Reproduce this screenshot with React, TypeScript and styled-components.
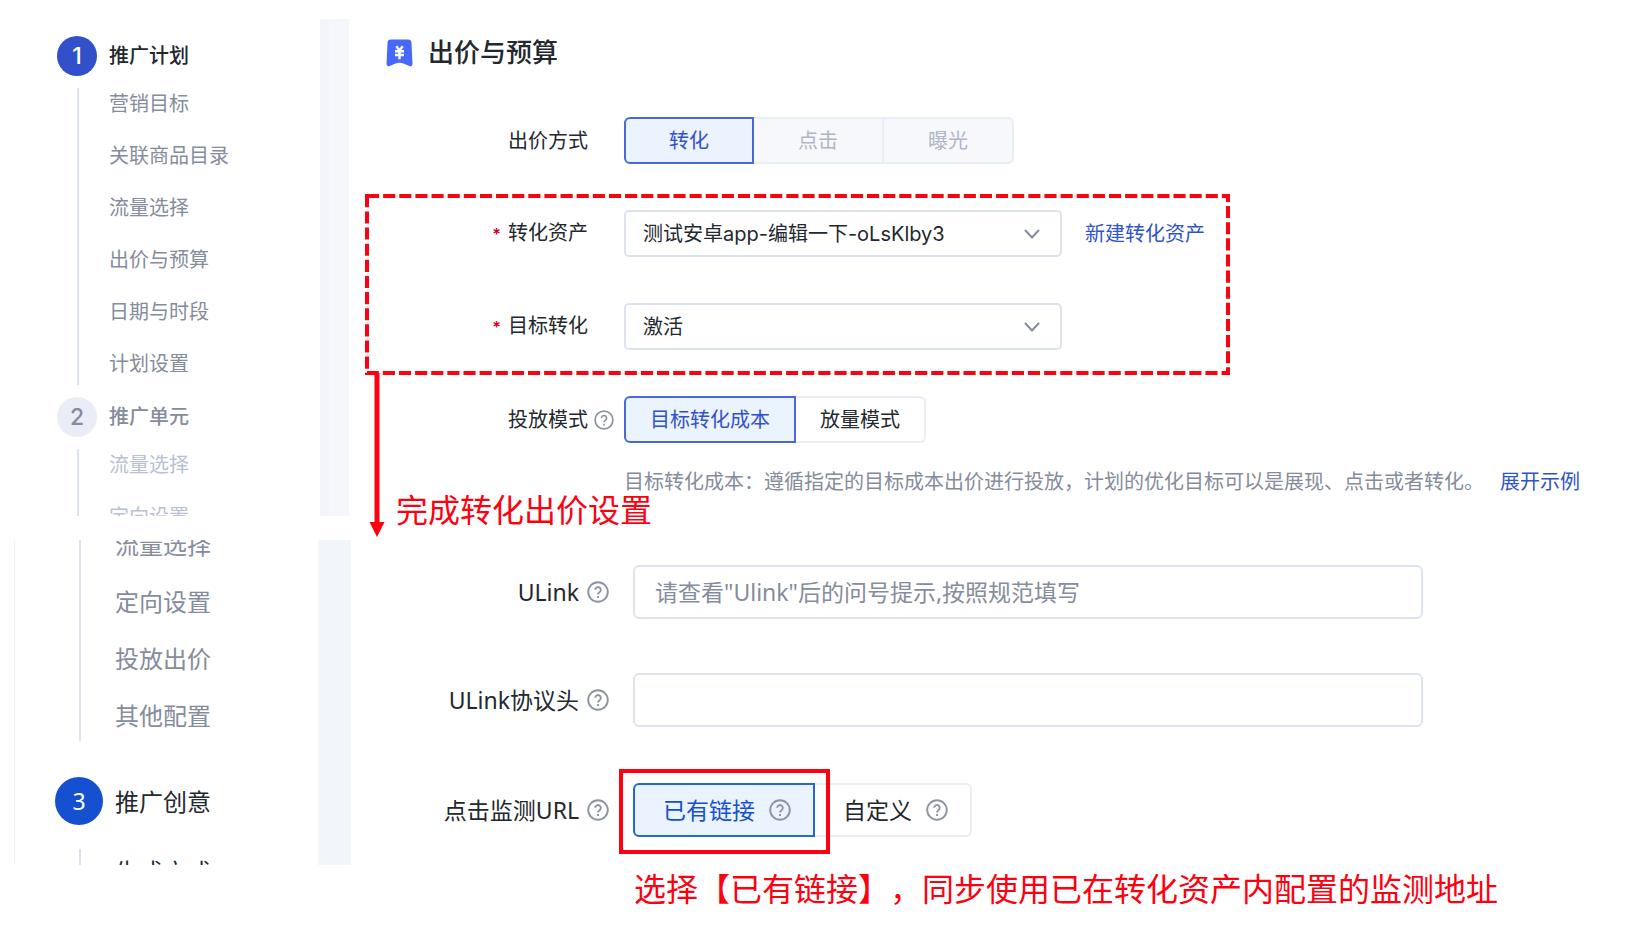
import React from "react";
import styled, { createGlobalStyle, css } from "styled-components";

const color = {
  ink: "#23272e",
  muted: "#858c9c",
  faint: "#b9c1d3",
  brand: "#3350cb",
  brandDeep: "#1450cf",
  link: "#2f54c9",
  tint: "#ebf3fe",
  line: "#dce2ef",
  red: "#ff0011",
};

const upperFont = `Inter, "Noto Sans CJK SC", sans-serif`;
const lowerFont = `"Noto Sans", "Noto Sans CJK SC", sans-serif`;

const GlobalStyle = createGlobalStyle`
  *, *::before, *::after { box-sizing: border-box; }
  body { margin: 0; background: #fff; color: ${color.ink}; font-family: ${upperFont}; text-spacing-trim: space-all; }
  button, input, select { font: inherit; color: inherit; margin: 0; }
  a { color: inherit; text-decoration: none; }
  h2, ol, ul, p { margin: 0; padding: 0; list-style: none; }
`;

type Size = "regular" | "large";

const Page = styled.div`
  display: flex;
  flex-direction: column;
  padding-top: 19px;
`;

const Capture = styled.section<{ $size: Size }>`
  display: flex;
  font-size: 20px;
  line-height: 28px;
  height: 497px;
  ${(p) =>
    p.$size === "large" &&
    css`
      margin: 24px 0 0 14px;
      height: 325px;
      border-left: 1px solid #eef2f8;
      font-family: ${lowerFont};
      font-size: 24px;
      line-height: 33px;
    `}
`;

const Sidebar = styled.nav<{ $size: Size }>`
  flex: none;
  overflow: hidden;
  width: ${(p) => (p.$size === "large" ? 303 : 320)}px;
  padding: ${(p) => (p.$size === "large" ? "0 0 0 40px" : "17px 0 0 57px")};
`;

const Gutter = styled.div<{ $size: Size }>`
  flex: none;
  width: ${(p) => (p.$size === "large" ? 33 : 29)}px;
  background: ${(p) => (p.$size === "large" ? "#f2f5fa" : "#f6f7fc")};
  ${(p) => p.$size === "regular" && "border-left: 9px solid #f4f5fa;"}
`;

const StepHead = styled.div<{ $size: Size; $active?: boolean }>`
  display: flex;
  align-items: center;
  gap: 12px;
  font-weight: ${(p) => (p.$size === "large" ? 400 : 500)};
  color: ${(p) => (p.$active ? color.ink : color.muted)};
`;

const StepBadge = styled.span<{ $size: Size; $active?: boolean }>`
  display: grid;
  place-items: center;
  flex: none;
  width: ${(p) => (p.$size === "large" ? 48 : 40)}px;
  height: ${(p) => (p.$size === "large" ? 48 : 40)}px;
  border-radius: 50%;
  font-size: 23px;
  color: ${(p) => (p.$active ? "#fff" : color.muted)};
  background: ${(p) =>
    !p.$active ? "#eaedf6" : p.$size === "large" ? color.brandDeep : color.brand};
`;

const StepItems = styled.ul<{ $size: Size; $tone?: string; $scrolled?: boolean }>`
  display: flex;
  flex-direction: column;
  gap: 24px;
  border-left: 2px solid ${color.line};
  color: ${(p) => p.$tone ?? color.muted};
  ${(p) =>
    p.$size === "large"
      ? css`
          margin: ${p.$scrolled ? "-18px" : "24px"} 0 36px 24px;
          padding: 6px 0 9px 34px;
        `
      : css`
          margin: 12px 0 12px 20px;
          padding: 2px 0 7px 30px;
        `}
`;

const Main = styled.div`
  position: relative;
  flex: 1;
  min-width: 0;
`;

const SectionTitle = styled.h2`
  display: flex;
  align-items: center;
  gap: 15px;
  padding: 18px 0 0 37px;
  font-size: 26px;
  font-weight: 500;
  line-height: 32px;
`;

const Form = styled.form<{ $size: Size }>`
  position: relative;
  display: flex;
  flex-direction: column;
  gap: ${(p) => (p.$size === "large" ? 56 : 46)}px;
  padding-top: ${(p) => (p.$size === "large" ? 25 : 48)}px;
  ${(p) => p.$size === "large" && "font-size: 23px;"}
`;

const FieldGroup = styled.div`
  display: flex;
  flex-direction: column;
  gap: 54px;
`;

const Row = styled.div<{ $size: Size }>`
  display: grid;
  align-items: center;
  grid-template-columns: ${(p) =>
    p.$size === "large" ? "228px 54px minmax(0, 1fr)" : "239px 36px minmax(0, 1fr)"};
`;

const labelStyle = css`
  text-align: right;
  white-space: nowrap;
`;
const Label = styled.label`
  ${labelStyle}
`;
const Caption = styled.span`
  ${labelStyle}
`;

const Required = styled.span`
  margin-right: 7px;
  color: #d0021b;
  font-size: 16px;
  font-weight: 600;
`;

const HelpSlot = styled.span<{ $size: Size }>`
  display: flex;
  padding-left: ${(p) => (p.$size === "large" ? 8 : 6)}px;
`;

const ControlLine = styled.div`
  display: flex;
  align-items: center;
  gap: 23px;
`;

const SelectBox = styled.span`
  position: relative;
  width: 438px;
`;

const SelectField = styled.select`
  display: block;
  appearance: none;
  width: 100%;
  height: 47px;
  padding: 0 48px 0 17px;
  border: 2px solid ${color.line};
  border-radius: 5px;
  background: #fff;
`;

const Chevron = styled.svg`
  position: absolute;
  top: 19px;
  right: 22px;
  pointer-events: none;
`;

const TextField = styled.input`
  width: 790px;
  max-width: 100%;
  height: 54px;
  padding: 0 20px;
  border: 2px solid ${color.line};
  border-radius: 6px;
  background: #fff;
  &::placeholder { color: ${color.muted}; opacity: 1; }
`;

const Segments = styled.div`
  display: flex;
`;

const Segment = styled.button<{ $size: Size; $wide?: boolean; $marked?: boolean }>`
  position: relative;
  display: flex;
  align-items: center;
  justify-content: center;
  gap: 14px;
  min-width: ${(p) => (p.$size === "large" ? 156 : 130)}px;
  height: ${(p) => (p.$size === "large" ? 54 : 47)}px;
  padding: ${(p) => (p.$size === "large" ? "0 22px 0 28px" : p.$wide ? "0 24px" : "0 22px")};
  border: 2px solid #e9edf5;
  border-left-width: 0;
  background: #fff;
  white-space: nowrap;
  &:first-child { border-radius: 6px 0 0 6px; }
  &:last-child { border-radius: 0 6px 6px 0; }
  &:disabled { background: #f7f8fc; color: #aeb5c5; }
  &[aria-pressed="true"] {
    border: 2px solid ${(p) => (p.$size === "large" ? "#2468d8" : "#4a68d8")};
    background: ${color.tint};
    color: ${(p) => (p.$size === "large" ? color.brandDeep : color.brand)};
  }
  ${(p) =>
    p.$marked &&
    css`
      z-index: 1;
      &::after {
        content: "";
        position: absolute;
        inset: -16px -17px -19px -16px;
        border: 4px solid ${color.red};
        pointer-events: none;
      }
    `}
`;

const TextLink = styled.a`
  color: ${color.link};
  white-space: nowrap;
`;

const Hint = styled.p`
  display: flex;
  gap: 16px;
  margin-top: 25px;
  padding-left: 275px;
  color: ${color.muted};
  white-space: nowrap;
`;

const Marked = styled.div`
  position: relative;
  display: flex;
  flex-direction: column;
  gap: 46px;
`;

const MarkDrawing = styled.svg`
  position: absolute;
  top: -16px;
  left: 16px;
  pointer-events: none;
`;

const noteStyle = css`
  font-family: ${lowerFont};
  font-size: 32px;
  line-height: 48px;
  color: ${color.red};
  white-space: nowrap;
`;

const FloatingNote = styled.p`
  ${noteStyle}
  position: absolute;
  left: 47px;
  bottom: -18px;
`;

const FootNote = styled.p`
  ${noteStyle}
  padding-left: 634px;
`;

function Help({ size }: { size: number }) {
  return (
    <svg width={size} height={size} viewBox="0 0 22 22" fill="none" stroke="#8d94a4" strokeWidth="1.9" aria-hidden="true">
      <circle cx="11" cy="11" r="9.8" />
      <path d="M8.200 8.800a2.800 2.800 0 1 1 4.500 2.300c-1.100.8-1.700 1.200-1.700 2.500" />
      <path d="M11 15v2" />
    </svg>
  );
}

function BudgetIcon() {
  return (
    <svg width="27" height="28" viewBox="0 0 27 28" aria-hidden="true">
      <path
        fill="#4768fd"
        d="M5 .5h17a3.500 3.500 0 0 1 3.500 3.300L26.500 25a2.200 2.200 0 0 1-3.200 2L18 24.800a11 11 0 0 0-9 0L3.700 27A2.200 2.200 0 0 1 .5 25L1.500 3.800A3.500 3.500 0 0 1 5 .5z"
      />
      <path d="M10.300 7.300l3.200 4.200 3.200-4.200M9 12.300h9M9 16h9M13.500 11.500v8.800" fill="none" stroke="#fff" strokeWidth="2.4" />
    </svg>
  );
}

function Dropdown({ id, value }: { id: string; value: string }) {
  return (
    <SelectBox>
      <SelectField id={id} defaultValue={value}>
        <option value={value}>{value}</option>
      </SelectField>
      <Chevron width="16" height="10" viewBox="0 0 16 10" fill="none" stroke="#858c9c" strokeWidth="2">
        <path d="M1 1l7 7.500L15 1" />
      </Chevron>
    </SelectBox>
  );
}

function Items({ names }: { names: string[] }) {
  return (
    <>
      {names.map((name) => (
        <li key={name}>
          <a href="#">{name}</a>
        </li>
      ))}
    </>
  );
}

export default function App() {
  return (
    <Page>
      <GlobalStyle />
      <Capture $size="regular">
        <Sidebar $size="regular">
          <StepHead $size="regular" $active>
            <StepBadge $size="regular" $active>1</StepBadge>
            推广计划
          </StepHead>
          <StepItems $size="regular">
            <Items names={["营销目标", "关联商品目录", "流量选择", "出价与预算", "日期与时段", "计划设置"]} />
          </StepItems>
          <StepHead $size="regular">
            <StepBadge $size="regular">2</StepBadge>
            推广单元
          </StepHead>
          <StepItems $size="regular" $tone={color.faint}>
            <Items names={["流量选择", "定向设置"]} />
          </StepItems>
        </Sidebar>
        <Gutter $size="regular" />
        <Main>
          <SectionTitle>
            <BudgetIcon />
            出价与预算
          </SectionTitle>
          <Form $size="regular">
            <Row $size="regular">
              <Caption>出价方式</Caption>
              <span />
              <Segments role="group" aria-label="出价方式">
                <Segment type="button" $size="regular" aria-pressed="true">转化</Segment>
                <Segment type="button" $size="regular" disabled>点击</Segment>
                <Segment type="button" $size="regular" disabled>曝光</Segment>
              </Segments>
            </Row>
            <Marked>
              <Row $size="regular">
                <Label htmlFor="asset"><Required>*</Required>转化资产</Label>
                <span />
                <ControlLine>
                  <Dropdown id="asset" value="测试安卓app-编辑一下-oLsKlby3" />
                  <TextLink href="#">新建转化资产</TextLink>
                </ControlLine>
              </Row>
              <Row $size="regular">
                <Label htmlFor="target"><Required>*</Required>目标转化</Label>
                <span />
                <Dropdown id="target" value="激活" />
              </Row>
              <MarkDrawing width="866" height="344" viewBox="0 0 866 344" fill="none" stroke={color.red}>
                <rect x="2" y="2" width="861" height="177" strokeWidth="4" strokeDasharray="12.1 4.030" />
                <path d="M12 179v151" strokeWidth="5" />
                <path d="M4.500 328h15L12 343z" fill={color.red} stroke="none" />
              </MarkDrawing>
            </Marked>
            <div>
              <Row $size="regular">
                <Caption>投放模式</Caption>
                <HelpSlot $size="regular"><Help size={20} /></HelpSlot>
                <Segments role="group" aria-label="投放模式">
                  <Segment type="button" $size="regular" $wide aria-pressed="true">目标转化成本</Segment>
                  <Segment type="button" $size="regular">放量模式</Segment>
                </Segments>
              </Row>
              <Hint>
                目标转化成本：遵循指定的目标成本出价进行投放，计划的优化目标可以是展现、点击或者转化。
                <TextLink href="#">展开示例</TextLink>
              </Hint>
            </div>
          </Form>
          <FloatingNote>完成转化出价设置</FloatingNote>
        </Main>
      </Capture>

      <Capture $size="large">
        <Sidebar $size="large">
          <StepItems $size="large" $scrolled>
            <Items names={["流量选择", "定向设置", "投放出价", "其他配置"]} />
          </StepItems>
          <StepHead $size="large" $active>
            <StepBadge $size="large" $active>3</StepBadge>
            推广创意
          </StepHead>
          <StepItems $size="large" $tone={color.ink}>
            <Items names={["生成方式"]} />
          </StepItems>
        </Sidebar>
        <Gutter $size="large" />
        <Main>
          <Form $size="large">
            <FieldGroup>
              <Row $size="large">
                <Label htmlFor="ulink">ULink</Label>
                <HelpSlot $size="large"><Help size={22} /></HelpSlot>
                <TextField id="ulink" placeholder={'请查看"Ulink"后的问号提示,按照规范填写'} />
              </Row>
              <Row $size="large">
                <Label htmlFor="scheme">ULink协议头</Label>
                <HelpSlot $size="large"><Help size={22} /></HelpSlot>
                <TextField id="scheme" />
              </Row>
            </FieldGroup>
            <Row $size="large">
              <Caption>点击监测URL</Caption>
              <HelpSlot $size="large"><Help size={22} /></HelpSlot>
              <Segments role="group" aria-label="点击监测URL">
                <Segment type="button" $size="large" $marked aria-pressed="true">
                  已有链接
                  <Help size={22} />
                </Segment>
                <Segment type="button" $size="large">
                  自定义
                  <Help size={22} />
                </Segment>
              </Segments>
            </Row>
          </Form>
        </Main>
      </Capture>
      <FootNote>选择【已有链接】，同步使用已在转化资产内配置的监测地址</FootNote>
    </Page>
  );
}
